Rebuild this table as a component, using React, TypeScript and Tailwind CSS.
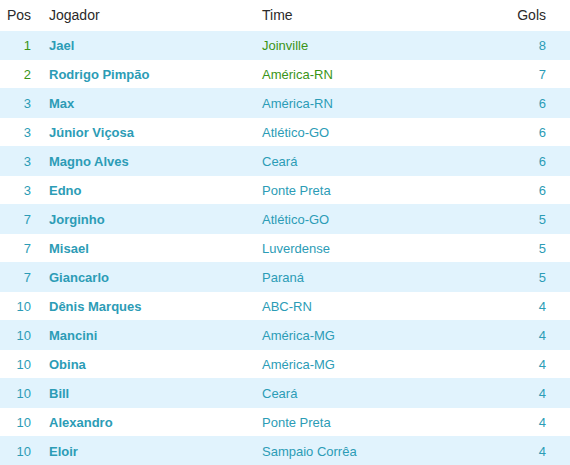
import React from 'react';

type Row = { pos: number; name: string; team: string; goals: number };

const rows: Row[] = [
  { pos: 1, name: 'Jael', team: 'Joinville', goals: 8 },
  { pos: 2, name: 'Rodrigo Pimpão', team: 'América-RN', goals: 7 },
  { pos: 3, name: 'Max', team: 'América-RN', goals: 6 },
  { pos: 3, name: 'Júnior Viçosa', team: 'Atlético-GO', goals: 6 },
  { pos: 3, name: 'Magno Alves', team: 'Ceará', goals: 6 },
  { pos: 3, name: 'Edno', team: 'Ponte Preta', goals: 6 },
  { pos: 7, name: 'Jorginho', team: 'Atlético-GO', goals: 5 },
  { pos: 7, name: 'Misael', team: 'Luverdense', goals: 5 },
  { pos: 7, name: 'Giancarlo', team: 'Paraná', goals: 5 },
  { pos: 10, name: 'Dênis Marques', team: 'ABC-RN', goals: 4 },
  { pos: 10, name: 'Mancini', team: 'América-MG', goals: 4 },
  { pos: 10, name: 'Obina', team: 'América-MG', goals: 4 },
  { pos: 10, name: 'Bill', team: 'Ceará', goals: 4 },
  { pos: 10, name: 'Alexandro', team: 'Ponte Preta', goals: 4 },
  { pos: 10, name: 'Eloir', team: 'Sampaio Corrêa', goals: 4 },
];

export default function App() {
  return (
    <div className="w-[570px] h-[465px] overflow-hidden bg-white font-['Liberation_Sans',Arial,sans-serif] text-[13px]">
      <div className="flex items-center h-[31px] text-[14px] text-[#2a2a2a]">
        <div className="w-[31px] text-right">Pos</div>
        <div className="ml-[18px] w-[213px]">Jogador</div>
        <div className="flex-1">Time</div>
        <div className="pr-[24px] text-right">Gols</div>
      </div>
      {rows.map((r, i) => {
        const top = i < 2;
        return (
          <div
            key={i}
            className={`flex items-center h-[29px] pt-px border-b border-[#e1f3fd] text-[#2c9cb6] ${i % 2 === 0 ? 'bg-[#e1f3fd]' : 'bg-white'}`}
          >
            <div className={`w-[31px] text-right ${top ? 'text-[#3a9418]' : ''}`}>{r.pos}</div>
            <div className="ml-[18px] w-[213px] font-bold">{r.name}</div>
            <div className={`flex-1 ${top ? 'text-[#3a9418]' : ''}`}>{r.team}</div>
            <div className="pr-[24px] text-right">{r.goals}</div>
          </div>
        );
      })}
    </div>
  );
}
